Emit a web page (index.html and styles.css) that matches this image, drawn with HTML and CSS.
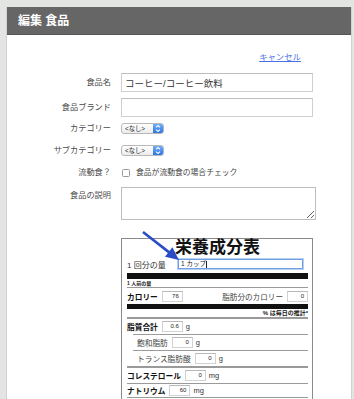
FILE: index.html
```html
<!DOCTYPE html>
<html lang="ja">
<head>
<meta charset="utf-8">
<title>編集 食品</title>
<link rel="stylesheet" href="styles.css">
</head>
<body>
<div class="card">
  <div class="header">編集 食品</div>
  <div class="cancel-row"><a class="cancel" href="#">キャンセル</a></div>
  <form class="form">
    <div class="row row-name">
      <label class="label">食品名</label>
      <input class="text-input" type="text" value="コーヒー/コーヒー飲料">
    </div>
    <div class="row row-brand">
      <label class="label">食品ブランド</label>
      <input class="text-input" type="text" value="">
    </div>
    <div class="row row-cat">
      <label class="label">カテゴリー</label>
      <span class="select"><span class="select-text">&lt;なし&gt;</span><span class="stepper"><svg width="10" height="11" viewBox="0 0 10 11"><path d="M3 4.3 L5 2.5 L7 4.3 M3 6.7 L5 8.5 L7 6.7" fill="none" stroke="#fff" stroke-width="1.1"/></svg></span></span>
    </div>
    <div class="row row-subcat">
      <label class="label">サブカテゴリー</label>
      <span class="select"><span class="select-text">&lt;なし&gt;</span><span class="stepper"><svg width="10" height="11" viewBox="0 0 10 11"><path d="M3 4.3 L5 2.5 L7 4.3 M3 6.7 L5 8.5 L7 6.7" fill="none" stroke="#fff" stroke-width="1.1"/></svg></span></span>
    </div>
    <div class="row row-liquid">
      <label class="label">流動食？</label>
      <span class="check-wrap"><span class="checkbox"></span><span class="check-text">食品が流動食の場合チェック</span></span>
    </div>
    <div class="row row-desc">
      <label class="label label-top">食品の説明</label>
      <textarea class="textarea"></textarea>
    </div>
    <div class="row row-panel">
      <div class="label"></div>
      <div class="panel">
        <svg class="arrow" width="44" height="36" viewBox="0 0 44 36"><line x1="4" y1="4" x2="30.5" y2="24.6" stroke="#2a4cc4" stroke-width="2.6"/><polygon points="40,32 26,28.7 33.4,19.3" fill="#2a4cc4"/></svg>
        <div class="panel-title">栄養成分表</div>
        <div class="serving">
          <span class="serving-label">1 回分の量</span>
          <span class="serving-input">1 カップ<span class="caret"></span></span>
        </div>
        <div class="bar-thick"></div>
        <div class="per-serving">1 人前の量</div>
        <div class="cal-row">
          <span class="b">カロリー</span>
          <span class="num-box">76</span>
          <span class="cal-fat">脂肪分のカロリー</span>
          <span class="num-box">0</span>
        </div>
        <div class="bar-mid"></div>
        <div class="daily">% は毎日の推計*</div>
        <div class="nrow thick"><span class="b">脂質合計</span><span class="num-box">0.6</span><span class="unit">g</span></div>
        <div class="nrow sub"><span class="r">飽和脂肪</span><span class="num-box">0</span><span class="unit">g</span></div>
        <div class="nrow sub"><span class="r">トランス脂肪酸</span><span class="num-box">0</span><span class="unit">g</span></div>
        <div class="nrow thick"><span class="b">コレステロール</span><span class="num-box">0</span><span class="unit">mg</span></div>
        <div class="nrow last"><span class="b">ナトリウム</span><span class="num-box">60</span><span class="unit">mg</span></div>
      </div>
    </div>
  </form>
</div>
</body>
</html>
```
FILE: styles.css
```css
html, body {
  margin: 0;
  padding: 0;
}
body {
  background: #e2e5e2;
  font-family: "Liberation Sans", "Noto Sans CJK JP", sans-serif;
  color: #444;
  height: 399px;
  overflow: hidden;
}
.card {
  margin: 7px 0 0 6px;
  width: 344px;
  height: 392px;
  background: #fff;
  border-left: 1px solid #cfd2cf;
  border-right: 1px solid #cfd2cf;
}
.header {
  height: 27px;
  background: #666;
  border-bottom: 1px solid #555;
  color: #fff;
  font-weight: bold;
  font-size: 12px;
  line-height: 28px;
  padding-left: 11px;
}
.cancel-row {
  display: flex;
  justify-content: flex-end;
  padding: 17px 50px 0 0;
  height: 11px;
}
.cancel {
  color: #4a6fe6;
  font-size: 8.4px;
  line-height: 11px;
  text-decoration: underline;
}
.form {
  display: flex;
  flex-direction: column;
  margin-top: 10px;
}
.row {
  display: flex;
  align-items: center;
  gap: 10px;
}
.label {
  width: 104px;
  flex: none;
  text-align: right;
  font-size: 8.2px;
  line-height: 10px;
  color: #4a4a4a;
}
.label-top {
  align-self: flex-start;
  margin-top: 4px;
}
.text-input {
  box-sizing: border-box;
  width: 192px;
  height: 19px;
  margin: 0;
  border: 1px solid #cfcfcf;
  border-top-color: #bdbdbd;
  padding: 0 3px;
  font-family: "Liberation Sans", "Noto Sans CJK JP", sans-serif;
  font-size: 9.5px;
  color: #333;
  outline: none;
}
.row-name { margin-bottom: 6px; }
.row-brand { margin-bottom: 6px; }
.row-cat { margin-bottom: 11px; height: 11px; }
.row-subcat { margin-bottom: 11px; height: 11px; }
.row-liquid { margin-bottom: 8px; height: 12px; }
.row-desc { margin-bottom: 18px; }
.row-panel { align-items: flex-start; }
.select {
  display: inline-flex;
  height: 11px;
  box-sizing: border-box;
  border: 1px solid #b8b8b8;
  border-radius: 3px;
  overflow: hidden;
  background: linear-gradient(#ffffff, #ececec);
}
.select-text {
  width: 31px;
  font-size: 6.3px;
  line-height: 9px;
  padding-left: 3px;
  box-sizing: border-box;
  color: #222;
}
.stepper {
  width: 10px;
  height: 9px;
  background: linear-gradient(#6eaefc, #2c74e8);
  display: flex;
  align-items: center;
  justify-content: center;
}
.stepper svg { display: block; }
.check-wrap {
  display: inline-flex;
  align-items: center;
  gap: 6px;
  margin-left: 1px;
}
.checkbox {
  width: 6px;
  height: 6px;
  border: 1px solid #9a9a9a;
  border-radius: 1.5px;
  background: #fff;
}
.check-text {
  font-size: 7.8px;
  line-height: 10px;
  color: #444;
}
.textarea {
  box-sizing: border-box;
  width: 195px;
  height: 33px;
  margin: 0;
  border: 1px solid #bdbdbd;
  padding: 2px;
  font-size: 9px;
}
.panel {
  position: relative;
  box-sizing: border-box;
  width: 192px;
  height: 161px;
  border: 1px solid #8a8a8a;
  border-bottom: none;
  padding: 0 4px 0 5px;
  color: #222;
  overflow: visible;
}
.arrow {
  position: absolute;
  left: 17px;
  top: -11px;
}
.panel-title {
  text-align: center;
  font-weight: bold;
  font-size: 17px;
  line-height: 15px;
  color: #111;
  margin-top: 1px;
}
.serving {
  display: flex;
  align-items: center;
  height: 12px;
  margin-top: 3px;
}
.serving-label {
  font-size: 8px;
  width: 51px;
  flex: none;
  color: #333;
}
.serving-input {
  box-sizing: border-box;
  width: 125px;
  height: 10px;
  border: 1px solid #6f9fe4;
  box-shadow: 0 0 0 1px #b6d0f3;
  font-size: 6.5px;
  line-height: 8px;
  padding-left: 2px;
  color: #222;
  display: flex;
  align-items: center;
}
.caret {
  width: 1px;
  height: 7px;
  background: #222;
  margin-left: 0.5px;
}
.bar-thick {
  height: 6px;
  background: #111;
  margin-top: 3px;
}
.per-serving {
  font-size: 5px;
  font-weight: bold;
  line-height: 6px;
  margin-top: 1px;
  padding-bottom: 1px;
  border-bottom: 1px solid #999;
}
.cal-row {
  display: flex;
  align-items: center;
  height: 16px;
}
.b {
  font-weight: bold;
  font-size: 7.7px;
  color: #111;
}
.r {
  font-size: 7.7px;
  color: #444;
}
.cal-fat {
  margin-left: auto;
  font-size: 7.6px;
  color: #444;
}
.num-box {
  box-sizing: border-box;
  width: 21px;
  height: 11px;
  margin-left: 4px;
  border: 1px solid #d2d2d2;
  border-top-color: #b8b8b8;
  font-size: 6px;
  line-height: 9px;
  text-align: right;
  padding-right: 3px;
  color: #222;
  background: #fff;
}
.bar-mid {
  height: 5px;
  background: #111;
}
.daily {
  text-align: right;
  font-size: 6px;
  font-weight: bold;
  line-height: 8px;
  color: #222;
}
.nrow {
  display: flex;
  align-items: center;
  height: 15px;
  border-top: 1px solid #9a9a9a;
}
.nrow.thick {
  border-top: 2px solid #9a9a9a;
}
.nrow.sub {
  margin-left: 6px;
  padding-left: 4px;
}
.nrow.last {
  height: 13px;
  border-bottom: 1px solid #9a9a9a;
}
.unit {
  font-size: 7.5px;
  margin-left: 3px;
  color: #333;
}
```
